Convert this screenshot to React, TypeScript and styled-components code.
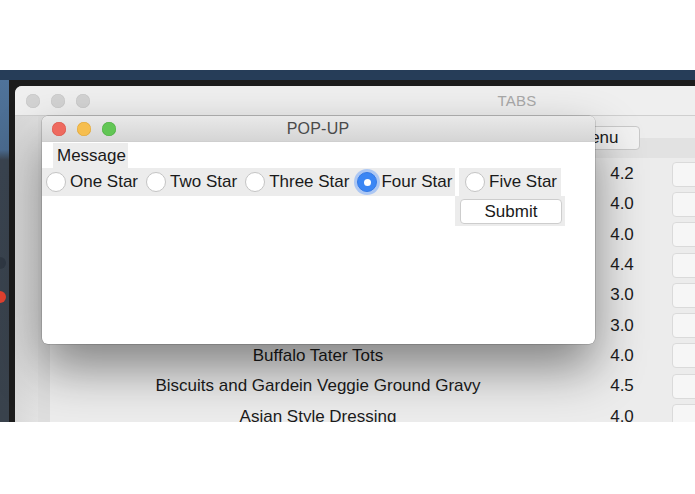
import React from "react";
import styled, { createGlobalStyle } from "styled-components";

const Global = createGlobalStyle`
  html, body { margin: 0; padding: 0; background: #ffffff; }
  body { font-family: "Liberation Sans", Arial, sans-serif; }
`;

const Page = styled.div`
  width: 695px;
  height: 494px;
  display: flex;
  flex-direction: column;
  background: #ffffff;
  overflow: hidden;
`;

const TopGap = styled.div`
  height: 70px;
  flex: none;
`;

const Desktop = styled.div`
  position: relative;
  height: 352px;
  flex: none;
  display: flex;
  flex-direction: column;
  overflow: hidden;
  background: #232323;
`;

const MenuStrip = styled.div`
  height: 10px;
  flex: none;
  background: #263d58;
`;

const DesktopBody = styled.div`
  flex: 1;
  display: flex;
  min-height: 0;
`;

const Dock = styled.div`
  width: 9px;
  flex: none;
  display: flex;
  flex-direction: column;
  background: linear-gradient(180deg, #4f739a 0px, #4a6a8e 70px, #3a4450 80px, #39424c 100%);
`;

const DockDot = styled.div<{ $top: number; $color: string }>`
  margin-top: ${(p) => p.$top}px;
  margin-left: -6px;
  width: 12px;
  height: 12px;
  border-radius: 50%;
  background: ${(p) => p.$color};
`;

const Frame = styled.div`
  flex: 1;
  display: flex;
  padding: 6px 0 0 6px;
  background: #1c1c1c;
  min-width: 0;
`;

const TabsWindow = styled.div`
  width: 1004px;
  flex: none;
  display: flex;
  flex-direction: column;
  border-top-left-radius: 7px;
  overflow: hidden;
  background: #e6e6e6;
`;

const TitleBar = styled.div<{ $h: number; $bg: string }>`
  position: relative;
  height: ${(p) => p.$h}px;
  flex: none;
  display: flex;
  align-items: center;
  background: ${(p) => p.$bg};
  border-bottom: 1px solid #cfcfcf;
  box-sizing: border-box;
`;

const Lights = styled.div<{ $pad: number }>`
  display: flex;
  gap: 11px;
  padding-left: ${(p) => p.$pad}px;
`;

const Light = styled.span<{ $c: string; $b: string }>`
  width: 14px;
  height: 14px;
  border-radius: 50%;
  background: ${(p) => p.$c};
  box-shadow: inset 0 0 0 0.5px ${(p) => p.$b};
`;

const WindowTitle = styled.div<{ $color: string; $center: number; $size: number }>`
  position: absolute;
  left: ${(p) => p.$center}px;
  transform: translateX(-50%);
  font-size: ${(p) => p.$size}px;
  color: ${(p) => p.$color};
  letter-spacing: 0.2px;
`;

const WindowBody = styled.div`
  flex: 1;
  display: flex;
  min-height: 0;
`;

const Sidebar = styled.div`
  width: 23px;
  flex: none;
  background: linear-gradient(90deg, #d9d9d9, #e2e2e2);
`;

const Gutter = styled.div`
  width: 12px;
  flex: none;
  background: #dedede;
`;

const Main = styled.div`
  flex: 1;
  display: flex;
  flex-direction: column;
  background: #ececec;
`;

const TabBar = styled.div`
  height: 42px;
  flex: none;
  display: flex;
  align-items: flex-start;
  padding-left: 514px;
  background: linear-gradient(180deg, #ededed 0px, #ededed 22px, #e2e2e2 22px, #e2e2e2 42px);
  box-sizing: border-box;
`;

const TabButton = styled.div`
  margin-top: 10px;
  width: 76px;
  height: 24px;
  box-sizing: border-box;
  background: #f2f2f2;
  border: 1px solid #c9c9c9;
  border-radius: 4px;
  font-size: 17px;
  color: #1b1b1b;
  display: flex;
  align-items: center;
  padding-left: 11px;
`;

const Table = styled.div`
  display: flex;
  flex-direction: column;
  padding-top: 1px;
`;

const Row = styled.div`
  height: 30.3px;
  display: grid;
  grid-template-columns: 536px 72px 14px 80px;
  align-items: center;
  font-size: 17px;
  color: #1b1b1b;
`;

const NameCell = styled.div`
  text-align: center;
  white-space: nowrap;
`;

const RatingCell = styled.div`
  text-align: center;
`;

const ActionCell = styled.div`
  grid-column: 4;
  height: 23px;
  background: #f6f6f6;
  border: 1px solid #dadada;
  border-radius: 4px;
`;

const Popup = styled.div`
  position: absolute;
  left: 42px;
  top: 46px;
  width: 553px;
  height: 228px;
  display: flex;
  flex-direction: column;
  background: #ffffff;
  border-radius: 6px;
  overflow: hidden;
  box-shadow: 0 0 0 0.5px rgba(0, 0, 0, 0.25), 0 24px 50px rgba(0, 0, 0, 0.45);
`;

const PopupBody = styled.div`
  flex: 1;
  display: flex;
  flex-direction: column;
  padding-top: 1px;
  font-size: 17px;
  color: #1a1a1a;
`;

const MessageRow = styled.div`
  display: flex;
  padding-left: 11px;
`;

const Panel = styled.div<{ $w?: number; $h: number; $pl?: number }>`
  ${(p) => (p.$w ? `width: ${p.$w}px;` : "")}
  height: ${(p) => p.$h}px;
  box-sizing: border-box;
  display: flex;
  align-items: center;
  padding-left: ${(p) => p.$pl ?? 0}px;
  background: #ececec;
  overflow: hidden;
`;

const RadioRow = styled.div`
  display: flex;
  gap: 4px;
`;

const RadioItem = styled.label`
  display: flex;
  align-items: center;
  gap: 4px;
  margin-right: 8px;
  white-space: nowrap;
  &:last-child { margin-right: 0; }
`;

const Circle = styled.span<{ $on?: boolean }>`
  width: 20px;
  height: 20px;
  box-sizing: border-box;
  border-radius: 50%;
  flex: none;
  display: flex;
  align-items: center;
  justify-content: center;
  background: ${(p) => (p.$on ? "#3b86f4" : "#ffffff")};
  border: 1px solid ${(p) => (p.$on ? "#3479e6" : "#c4c4c4")};
  box-shadow: ${(p) => (p.$on ? "0 0 0 3px rgba(120, 170, 250, 0.55)" : "none")};
  &::after {
    content: "";
    display: ${(p) => (p.$on ? "block" : "none")};
    width: 7px;
    height: 7px;
    border-radius: 50%;
    background: #ffffff;
  }
`;

const SubmitRow = styled.div`
  display: flex;
  padding-left: 413px;
`;

const SubmitButton = styled.button`
  margin: 1px 0 0 5px;
  width: 102px;
  height: 25px;
  box-sizing: border-box;
  background: #ffffff;
  border: 1px solid #cdcdcd;
  border-radius: 4px;
  font-family: "Liberation Sans", Arial, sans-serif;
  font-size: 17px;
  color: #1a1a1a;
  padding: 0;
`;

const rows = [
  { name: "Chicken Tenders", rating: "4.2" },
  { name: "Cheese Pizza", rating: "4.0" },
  { name: "Garden Salad", rating: "4.0" },
  { name: "Mac and Cheese", rating: "4.4" },
  { name: "Green Beans", rating: "3.0" },
  { name: "Rice Pilaf", rating: "3.0" },
  { name: "Buffalo Tater Tots", rating: "4.0" },
  { name: "Biscuits and Gardein Veggie Ground Gravy", rating: "4.5" },
  { name: "Asian Style Dressing", rating: "4.0" },
];

const stars = ["One Star", "Two Star", "Three Star", "Four Star"];

export default function App() {
  return (
    <>
      <Global />
      <Page>
        <TopGap />
        <Desktop>
          <MenuStrip />
          <DesktopBody>
            <Dock>
              <DockDot $top={177} $color="#2f3843" />
              <DockDot $top={22} $color="#e2412f" />
            </Dock>
            <Frame>
              <TabsWindow>
                <TitleBar $h={30} $bg="#efefef">
                  <Lights $pad={11}>
                    <Light $c="#d3d3d3" $b="#c6c6c6" />
                    <Light $c="#d3d3d3" $b="#c6c6c6" />
                    <Light $c="#d3d3d3" $b="#c6c6c6" />
                  </Lights>
                  <WindowTitle $color="#a9a9a9" $center={502} $size={15}>TABS</WindowTitle>
                </TitleBar>
                <WindowBody>
                  <Sidebar />
                  <Gutter />
                  <Main>
                    <TabBar>
                      <TabButton>Menu</TabButton>
                    </TabBar>
                    <Table>
                      {rows.map((r) => (
                        <Row key={r.name}>
                          <NameCell>{r.name}</NameCell>
                          <RatingCell>{r.rating}</RatingCell>
                          <ActionCell />
                        </Row>
                      ))}
                    </Table>
                  </Main>
                </WindowBody>
              </TabsWindow>
            </Frame>
          </DesktopBody>
          <Popup>
            <TitleBar $h={26} $bg="linear-gradient(180deg, #e9e9e9, #d5d5d5)">
              <Lights $pad={10}>
                <Light $c="#ee6a5f" $b="#d9564b" />
                <Light $c="#f6be4f" $b="#dea53a" />
                <Light $c="#62c655" $b="#4fae44" />
              </Lights>
              <WindowTitle $color="#4a4a4a" $center={276} $size={16}>POP-UP</WindowTitle>
            </TitleBar>
            <PopupBody>
              <MessageRow>
                <Panel $w={75} $h={25} $pl={4}>Message</Panel>
              </MessageRow>
              <RadioRow>
                <Panel $w={413} $h={28} $pl={4}>
                  {stars.map((s, i) => (
                    <RadioItem key={s}>
                      <Circle $on={i === 3} />
                      {s}
                    </RadioItem>
                  ))}
                </Panel>
                <Panel $w={102} $h={28} $pl={6}>
                  <RadioItem>
                    <Circle />
                    Five Star
                  </RadioItem>
                </Panel>
              </RadioRow>
              <SubmitRow>
                <Panel $w={110} $h={30}>
                  <SubmitButton>Submit</SubmitButton>
                </Panel>
              </SubmitRow>
            </PopupBody>
          </Popup>
        </Desktop>
      </Page>
    </>
  );
}
